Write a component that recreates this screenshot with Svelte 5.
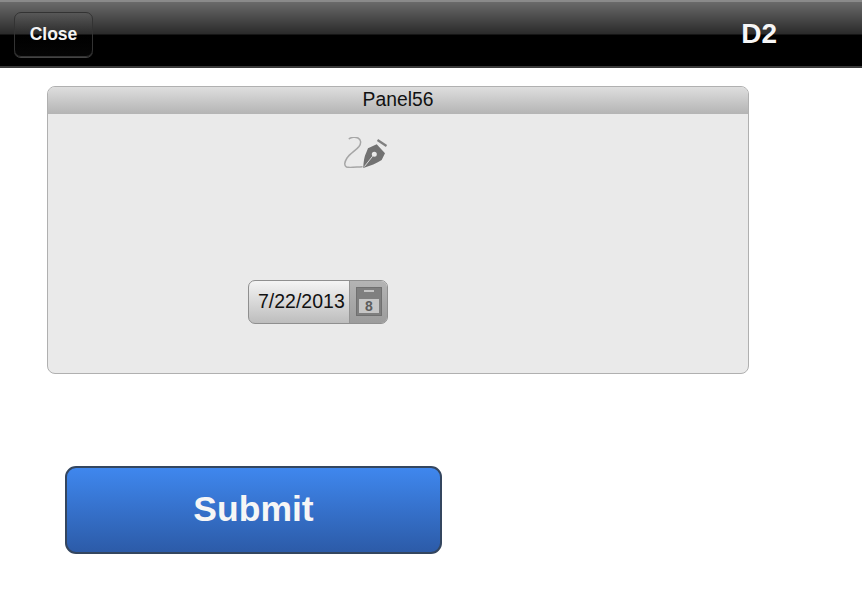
<script>
	let title = "D2";
	let panelName = "Panel56";
	let date = "7/22/2013";
</script>

<div class="page">
	<header class="topbar">
		<button class="close">Close</button>
		<span class="title">{title}</span>
	</header>

	<section class="panel">
		<div class="panel_head">{panelName}</div>
		<div class="panel_body">
			<svg class="sign" width="44" height="34" viewBox="0 0 44 34" fill="none">
				<path d="M5.3 1.6 C7 0.3 11 -0.3 14 1 C17 2.5 17.5 6 15 9.5 C12 13.5 6 16.5 3 21 C0.5 25 -0.2 28.5 2.5 30 C5 31 12 30 18 29.7" stroke="#a6a6a6" stroke-width="1.5" stroke-linecap="round"/>
				<path d="M19.3 31 C19.5 25 20.5 19 22 16.3 L24 11.3 L32.7 7.3 L41 16.3 L37.7 23 C33 26 26 29 19.3 31 Z M30.3 14.8 A2.5 2.5 0 1 0 30.3 19.8 A2.5 2.5 0 1 0 30.3 14.8 Z" fill="#727272" fill-rule="evenodd"/>
				<path d="M20.5 29.5 L28.6 19.2" stroke="#dcdcdc" stroke-width="1"/>
				<path d="M33.5 3 L42.5 9" stroke="#808080" stroke-width="2.2"/>
			</svg>
			<div class="date_field">
				<span class="date_value">{date}</span>
				<span class="date_btn">
					<svg width="26" height="29" viewBox="0 0 26 29">
						<rect x="0.5" y="0.5" width="25" height="28" fill="#7f7f7f" stroke="#707070"/>
						<rect x="8" y="3" width="10" height="2" fill="#c4c4c4"/>
						<rect x="3" y="12" width="20" height="14" fill="#c6c6c6"/>
						<text x="13" y="24" text-anchor="middle" class="cal_num">8</text>
					</svg>
				</span>
			</div>
		</div>
	</section>

	<button class="submit">Submit</button>
</div>

<style>
	:global(body) {
		background: #fff;
	}

	.page {
		width: 862px;
		height: 592px;
		overflow: hidden;
		font-family: "Liberation Sans", Arial, sans-serif;
	}

	.topbar {
		box-sizing: border-box;
		height: 68px;
		display: flex;
		align-items: center;
		padding: 0 85px 0 14px;
		justify-content: space-between;
		border-top: 2px solid #8a8a8a;
		border-bottom: 2px solid #3a3a3a;
		background: linear-gradient(#6a6a6a 0, #2a2a2a 32px, #000 33px, #000 100%);
	}

	.close {
		width: 79px;
		height: 45px;
		padding: 0;
		border: 1px solid #333;
		border-radius: 7px;
		background: linear-gradient(#585858 0, #2c2c2c 21px, #000 22px, #050505 100%);
		box-shadow: 0 1px 0 #444;
		color: #f4f4f4;
		font: bold 17.5px "Liberation Sans", Arial, sans-serif;
	}

	.title {
		color: #f6f6f6;
		font-size: 28px;
		font-weight: bold;
	}

	.panel {
		box-sizing: border-box;
		width: 702px;
		height: 288px;
		margin: 18px 0 0 47px;
		border: 1px solid #b0b0b0;
		border-radius: 8px;
		background: #eaeaea;
		overflow: hidden;
	}

	.panel_head {
		height: 27px;
		line-height: 26px;
		text-align: center;
		font-size: 19.3px;
		color: #111;
		background: linear-gradient(#dedede, #b4b4b4);
	}

	.panel_body {
		position: relative;
		padding: 23px 0 0 200px;
	}

	.sign {
		display: block;
		margin-left: 96px;
	}

	.date_field {
		box-sizing: border-box;
		width: 140px;
		height: 44px;
		margin-top: 109px;
		display: flex;
		border: 1px solid #8f8f8f;
		border-radius: 7px;
		overflow: hidden;
		background: linear-gradient(#f4f4f4, #bdbdbd);
	}

	.date_value {
		width: 100px;
		flex: none;
		line-height: 40px;
		padding-left: 9px;
		box-sizing: border-box;
		font-size: 19.5px;
		color: #111;
		white-space: nowrap;
	}

	.date_btn {
		flex: 1;
		display: flex;
		align-items: center;
		justify-content: center;
		padding-bottom: 1px;
		background: linear-gradient(#b4b4b4, #9c9c9c);
		border-left: 1px solid #949494;
	}

	.cal_num {
		font: bold 14px "Liberation Sans", Arial, sans-serif;
		fill: #5c5c5c;
	}

	.submit {
		display: block;
		box-sizing: border-box;
		width: 377px;
		height: 88px;
		margin: 92px 0 0 65px;
		padding: 0 0 1px;
		border: 2px solid #34465f;
		border-radius: 11px;
		background: linear-gradient(#3f87ee, #2c5ba8);
		color: #f6f6f6;
		font: bold 35.5px "Liberation Sans", Arial, sans-serif;
	}
</style>
